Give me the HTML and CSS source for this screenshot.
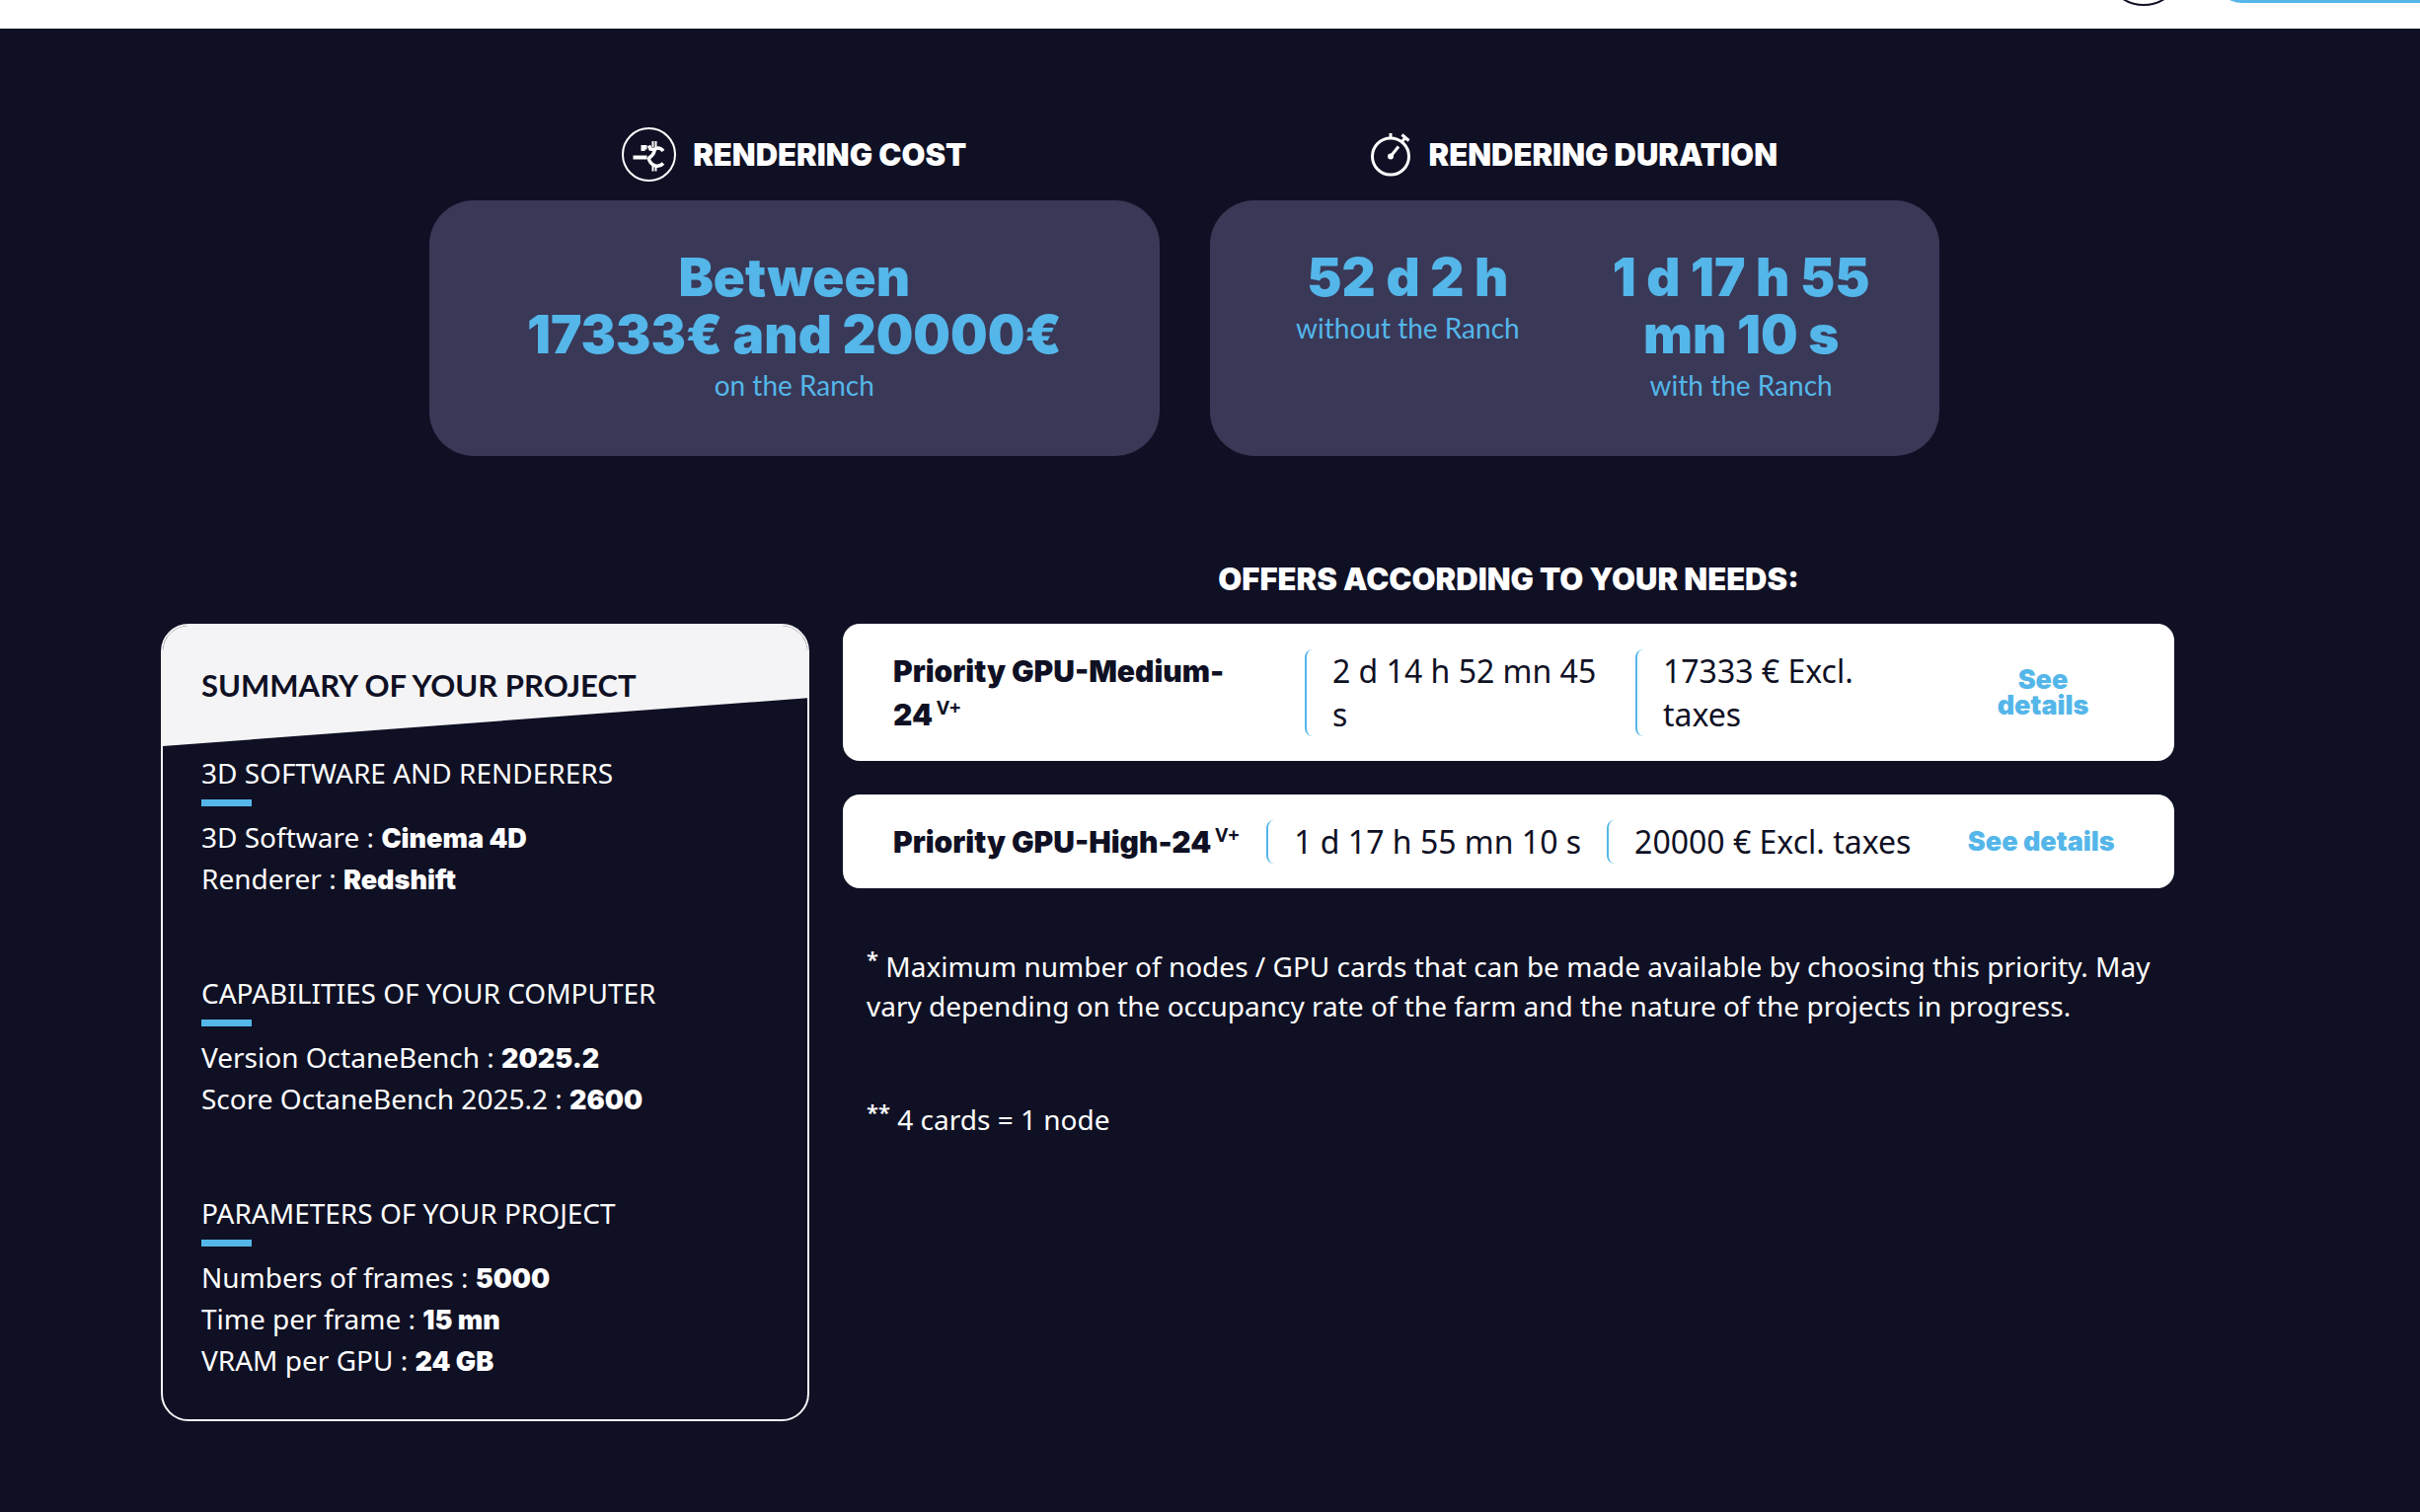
FILE: index.html
```html
<!DOCTYPE html>
<html lang="en">
<head>
    <meta charset="UTF-8">
    <meta name="viewport" content="width=device-width, initial-scale=1.0">
    <title>Rendering cost estimate</title>
    <link rel="stylesheet" href="styles.css">
</head>
<body>
    <header class="topbar">
        <a class="topbar-account" href="#" aria-label="Account"></a>
        <a class="topbar-button" href="#" aria-label="Get started"></a>
    </header>
    <main>
        <section class="results">
            <div class="result">
                <h2 class="result-title">
                    <svg width="55" height="55" viewBox="0 0 55 55" fill="none" stroke="#fff" aria-hidden="true">
                        <circle cx="27.500" cy="27.500" r="26.500" stroke-width="2"/>
                        <path d="M19.500 18H25.500V22.500H23.500V24H19.500Z" fill="#fff" stroke="none"/>
                        <path d="M11.500 30.500H25.500" stroke-width="4"/>
                        <path d="M27.500 18.500L29 22L34.500 22.500" stroke-width="3.500"/>
                        <path d="M42 24C38.500 19.500 33.500 20.500 33 24C32.500 28 30.500 29 27 31.500" stroke-width="3.500"/>
                        <path d="M27 30.500C28.500 38.500 37 42 42 36.500" stroke-width="3.500"/>
                        <path d="M31.500 14V20M34.500 14V20M31.500 38V44.500M34.500 38V44.500" stroke-width="2"/>
                    </svg>
                    RENDERING COST
                </h2>
                <div class="result-card">
                    <div class="result-item">
                        <p class="result-value">Between<br>17333€ and 20000€</p>
                        <p class="result-label">on the Ranch</p>
                    </div>
                </div>
            </div>
            <div class="result">
                <h2 class="result-title">
                    <svg width="41" height="44" viewBox="0 0 41 44" fill="none" stroke="#fff" stroke-width="3" aria-hidden="true">
                        <circle cx="20" cy="23.500" r="18.500"/>
                        <path d="M20 0V6"/>
                        <path d="M31.500 1.500L38.500 7.500M35 4.500L31.500 8.500"/>
                        <path d="M20 23.500L28 13.500"/>
                        <circle cx="20" cy="23.500" r="3" fill="#fff" stroke="none"/>
                    </svg>
                    RENDERING DURATION
                </h2>
                <div class="result-card">
                    <div class="result-item">
                        <p class="result-value">52 d 2 h</p>
                        <p class="result-label">without the Ranch</p>
                    </div>
                    <div class="result-item">
                        <p class="result-value">1 d 17 h 55 mn 10 s</p>
                        <p class="result-label">with the Ranch</p>
                    </div>
                </div>
            </div>
        </section>

        <section class="estimate">
            <h2 class="offers-title">OFFERS ACCORDING TO YOUR NEEDS:</h2>
            <aside class="summary">
                <h2 class="summary-title">SUMMARY OF YOUR PROJECT</h2>
                <div class="summary-block">
                    <h3>3D SOFTWARE AND RENDERERS</h3>
                    <p>3D Software : <strong>Cinema 4D</strong></p>
                    <p>Renderer : <strong>Redshift</strong></p>
                </div>
                <div class="summary-block">
                    <h3>CAPABILITIES OF YOUR COMPUTER</h3>
                    <p>Version OctaneBench : <strong>2025.2</strong></p>
                    <p>Score OctaneBench 2025.2 : <strong>2600</strong></p>
                </div>
                <div class="summary-block">
                    <h3>PARAMETERS OF YOUR PROJECT</h3>
                    <p>Numbers of frames : <strong>5000</strong></p>
                    <p>Time per frame : <strong>15 mn</strong></p>
                    <p>VRAM per GPU : <strong>24 GB</strong></p>
                </div>
            </aside>
            <div class="offers">
                <div class="offer offer-medium">
                    <h3 class="offer-name">Priority GPU-Medium-<br>24<sup>V+</sup></h3>
                    <p class="offer-info">2 d 14 h 52 mn 45 s</p>
                    <p class="offer-info">17333 € Excl. taxes</p>
                    <a class="offer-link" href="#">See<br>details</a>
                </div>
                <div class="offer offer-high">
                    <h3 class="offer-name">Priority GPU-High-24<sup>V+</sup></h3>
                    <p class="offer-info">1 d 17 h 55 mn 10 s</p>
                    <p class="offer-info">20000 € Excl. taxes</p>
                    <a class="offer-link" href="#">See details</a>
                </div>
                <div class="notes">
                    <p><sup>*</sup> Maximum number of nodes / GPU cards that can be made available by choosing this priority. May vary depending on the occupancy rate of the farm and the nature of the projects in progress.</p>
                    <p><sup>**</sup> 4 cards = 1 node</p>
                </div>
            </div>
        </section>
    </main>
</body>
</html>
```
FILE: styles.css
```css
* {
    box-sizing: border-box;
}
body {
    margin: 0;
    background-color: #0f1024;
    color: #fff;
    font-family: "Noto Sans", sans-serif;
    font-size: 28px;
    line-height: 42px;
}
h2, h3, p {
    margin: 0;
}
a {
    text-decoration: none;
}

/* bottom edge of the sticky menu */
.topbar {
    display: flex;
    justify-content: flex-end;
    align-items: flex-end;
    gap: 30px;
    height: 29px;
    overflow: hidden;
    background-color: #fff;
}
.topbar-account {
    width: 80px;
    height: 80px;
    margin-bottom: 23px;
    border: 2px solid #0f1024;
    border-radius: 50%;
}
.topbar-button {
    width: 210px;
    height: 60px;
    margin-bottom: 26px;
    background-color: #54b6e9;
    border-radius: 30px 0 0 30px;
}

.results {
    display: grid;
    grid-template-columns: 1fr 1fr;
    gap: 51px;
    padding: 100px 487px 0 435px;
}
.result-title {
    display: flex;
    justify-content: center;
    align-items: center;
    gap: 17px;
    height: 55px;
    margin-bottom: 19px;
    font-family: Inter, sans-serif;
    font-size: 31px;
    font-weight: 900;
}
.result-card {
    display: flex;
    padding: 49px 32px 50px;
    background-color: #3a3857;
    border-radius: 45px;
    color: #54b6e9;
    font-family: Lato, sans-serif;
    text-align: center;
}
.result-item {
    flex: 1;
}
.result-value {
    font-family: Inter, sans-serif;
    font-size: 53px;
    font-weight: 900;
    line-height: 58px;
}
.result-label {
    line-height: 44px;
}

.estimate {
    display: grid;
    grid-template-columns: 657fr 1349fr;
    column-gap: 34px;
    row-gap: 23px;
    align-items: start;
    padding: 103px 249px 80px 163px;
}
.offers-title {
    grid-column: 2;
    font-family: Inter, sans-serif;
    font-size: 31px;
    font-weight: 900;
    line-height: 44px;
    text-align: center;
}

.summary {
    padding-bottom: 39px;
    border: 2px solid #f4f4f6;
    border-radius: 28px;
    overflow: hidden;
}
.summary-title {
    padding: 38px 39px 40px;
    background-color: #f4f4f6;
    clip-path: polygon(0 0, 100% 0, 100% 60%, 0 100%);
    color: #0f1024;
    font-family: Lato, sans-serif;
    font-size: 31px;
    font-weight: 700;
    line-height: 44px;
}
.summary-block {
    padding: 6px 39px 0;
}
.summary-block + .summary-block {
    padding-top: 74px;
}
.summary-block h3 {
    font-size: 28px;
    font-weight: 400;
}
.summary-block h3::after {
    content: '';
    display: block;
    width: 51px;
    height: 7px;
    margin: 6px 0 10px;
    background-color: #54b6e9;
}
.summary-block strong {
    font-family: Inter, sans-serif;
    font-size: 27px;
    font-weight: 900;
    line-height: 1;
}

.offer {
    display: grid;
    align-items: center;
    margin-bottom: 34px;
    padding: 26px 51px 25px;
    background-color: #fff;
    border-radius: 17px;
    color: #0f1024;
    font-size: 32px;
    line-height: 44px;
}
.offer-medium {
    grid-template-columns: 417fr 335fr 331fr 164fr;
}
.offer-high {
    grid-template-columns: 379fr 343fr 338fr 206fr;
    padding-right: 32px;
    white-space: nowrap;
}
.offer-name {
    font-family: Inter, sans-serif;
    font-size: 30px;
    font-weight: 900;
}
.offer-name sup {
    margin-left: 4px;
    font-family: "Noto Sans", sans-serif;
    font-size: 20px;
    font-weight: 700;
    line-height: 0;
    vertical-align: 11px;
}
.offer-info {
    padding: 0 26px;
    border-left: 2px solid #54b6e9;
    border-radius: 8px;
}
.offer-link {
    color: #54b6e9;
    font-family: Inter, sans-serif;
    font-size: 27px;
    font-weight: 900;
    line-height: 26px;
    text-align: center;
}

.notes {
    padding: 25px 0 0 24px;
    line-height: 40px;
}
.notes p + p {
    margin-top: 75px;
}
.notes sup {
    font-size: 22px;
    font-weight: 600;
    line-height: 0;
}
```
